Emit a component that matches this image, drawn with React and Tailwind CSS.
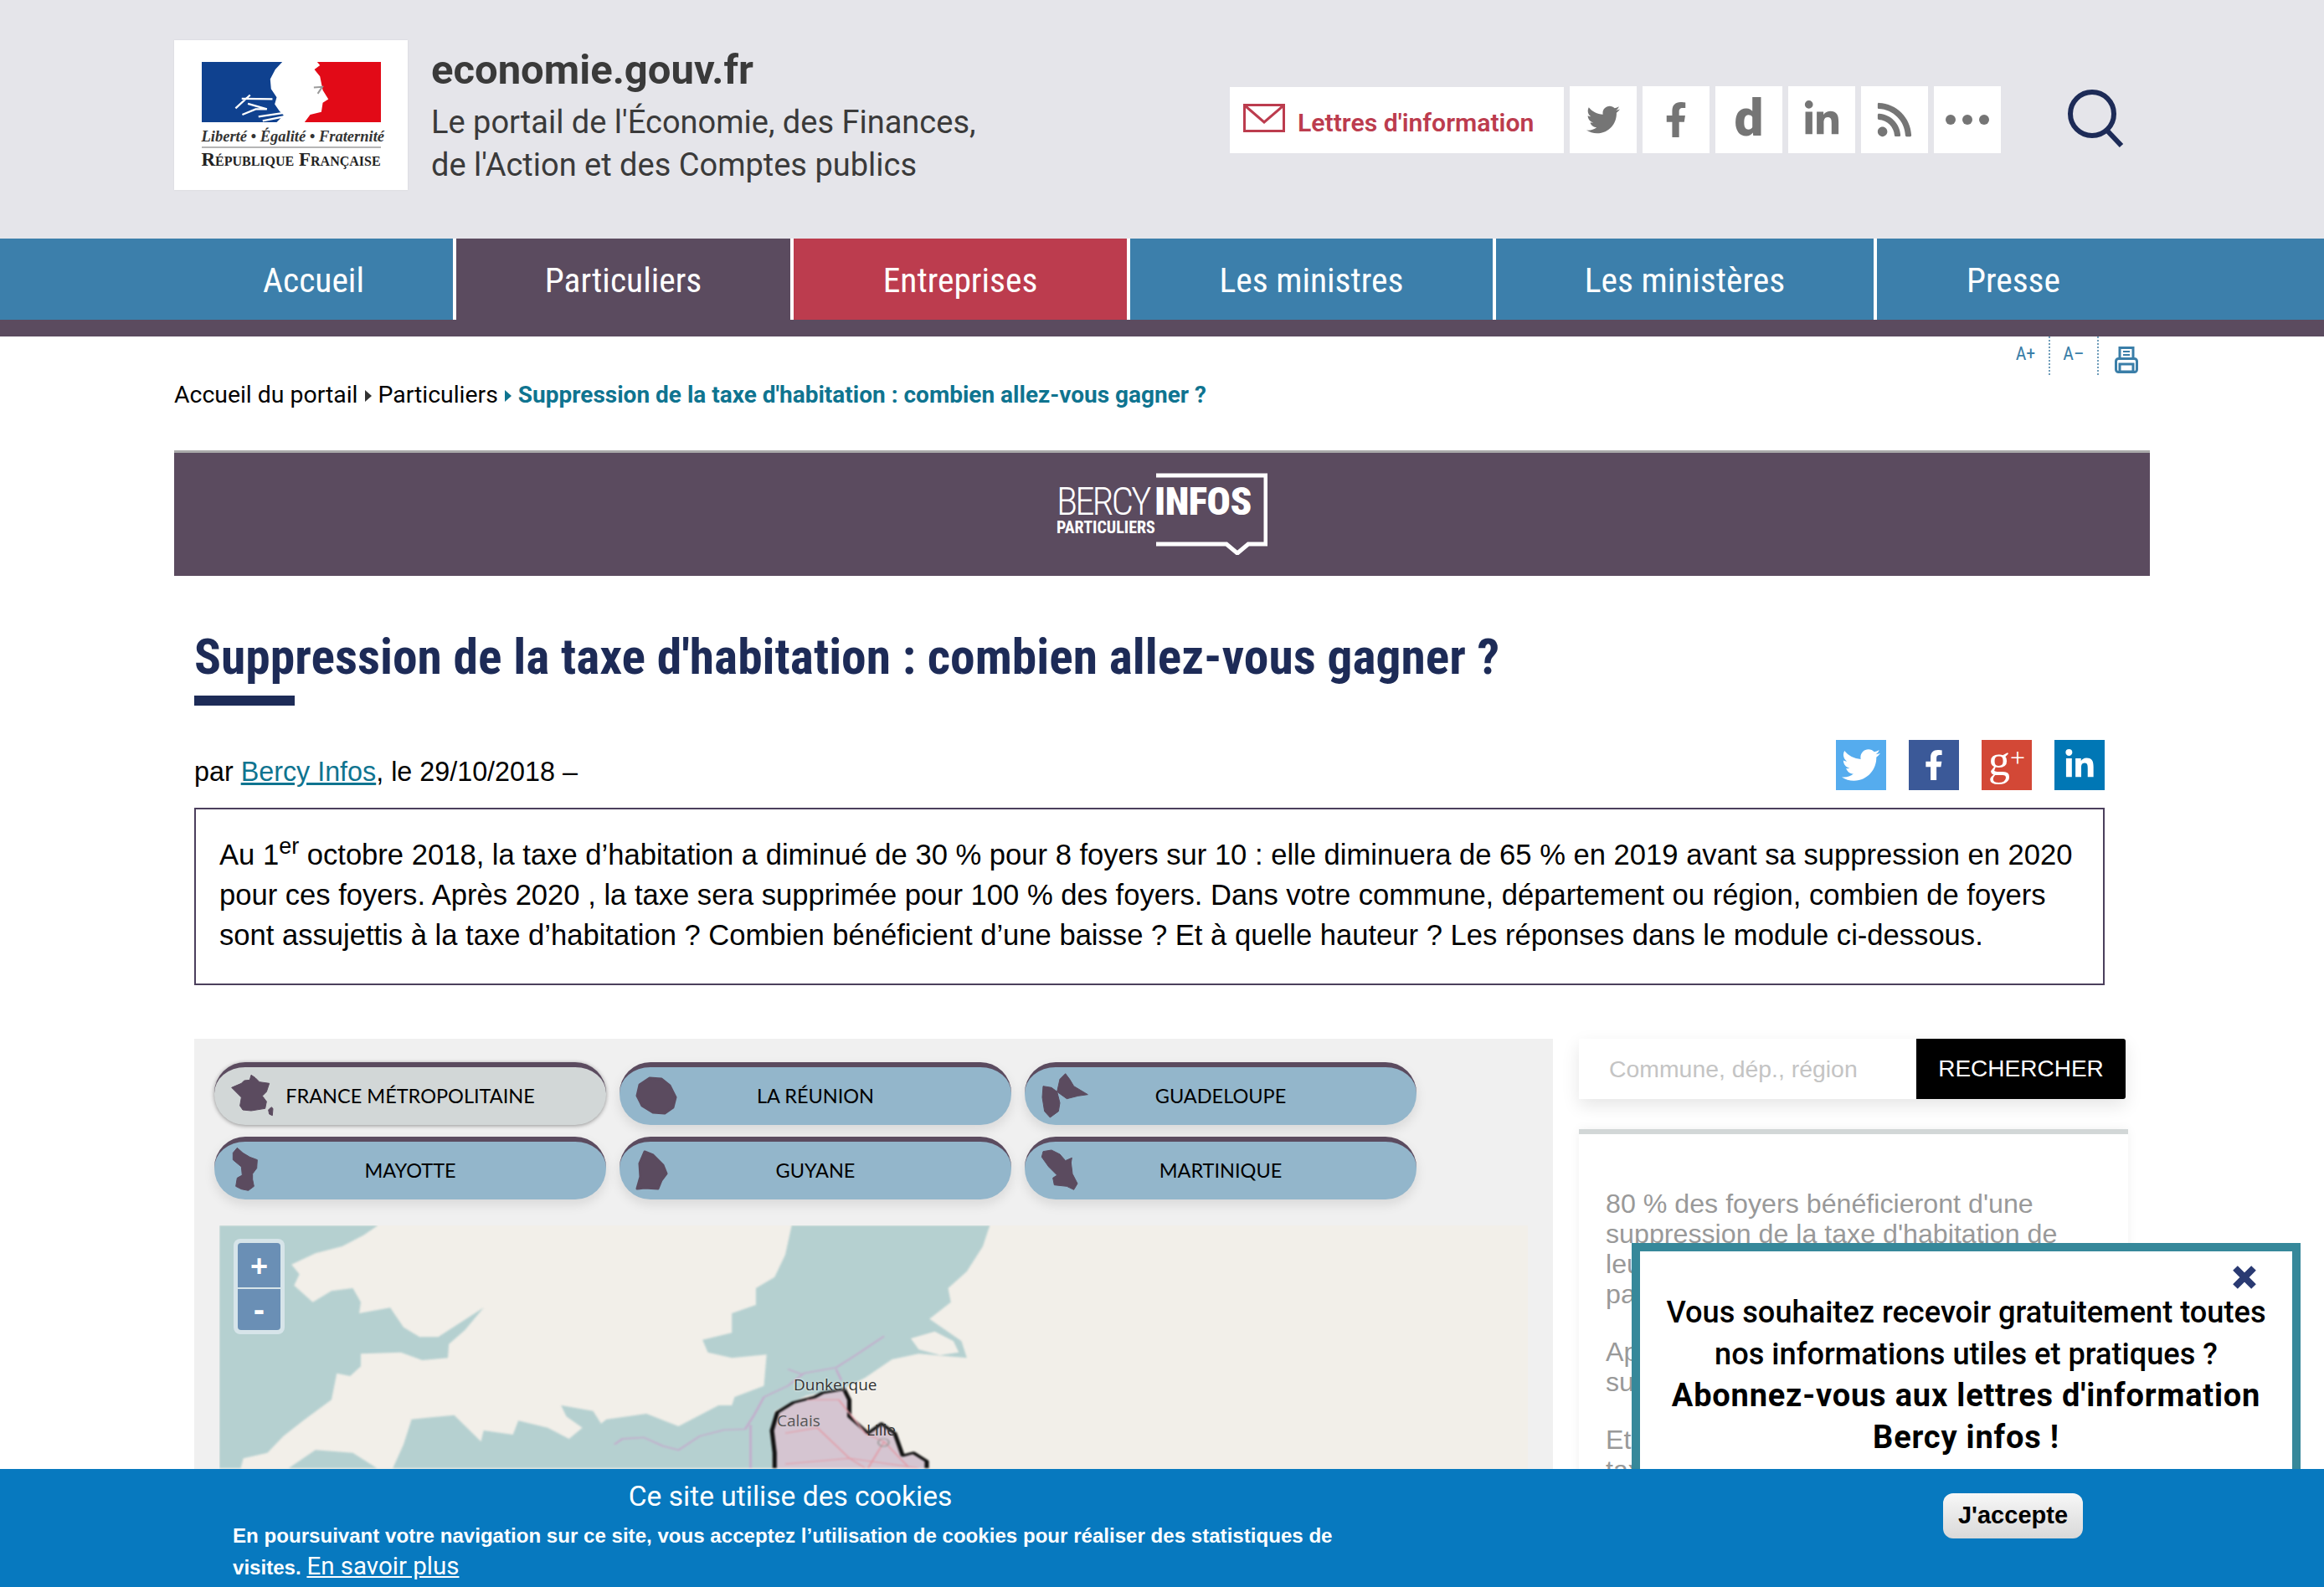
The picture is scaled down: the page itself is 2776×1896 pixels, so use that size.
import React from 'react';
import { FaTwitter, FaFacebookF, FaLinkedinIn, FaRss } from 'react-icons/fa';

const navItems = [
  { label: 'Accueil', cls: 'w-[541px] pl-[208px] bg-[#3c7fab]' },
  { label: 'Particuliers', cls: 'w-[399px] bg-[#5b4b5f]' },
  { label: 'Entreprises', cls: 'w-[398px] bg-[#bc3c4e]' },
  { label: 'Les ministres', cls: 'w-[433px] bg-[#3c7fab]' },
  { label: 'Les ministères', cls: 'w-[451px] bg-[#3c7fab]' },
  { label: 'Presse', cls: 'flex-1 pr-[208px] bg-[#3c7fab]' },
];

const territories = [
  {
    label: 'FRANCE MÉTROPOLITAINE',
    active: true,
    box: '18 24 300 225',
    shapes: [
      '150,70 165,80 180,95 215,100 205,130 190,145 205,165 200,190 150,198 120,195 110,180 115,150 80,115 115,100 125,90 145,88',
      '222,185 228,190 226,215 215,210 212,195',
    ],
  },
  {
    label: 'LA RÉUNION',
    box: '0 0 100 75',
    shapes: ['36,19 50,20 60,28 67,42 64,54 54,61 40,60 27,52 21,40 24,27'],
  },
  {
    label: 'GUADELOUPE',
    box: '9 24 300 225',
    shapes: [
      '155,65 170,85 185,110 235,140 200,145 160,155 125,130 135,85',
      '75,110 105,115 125,130 135,170 130,200 100,222 80,200 72,150',
    ],
  },
  {
    label: 'MAYOTTE',
    box: '18 292 300 225',
    shapes: ['100,332 120,350 145,365 172,375 170,405 155,425 155,445 160,470 140,485 115,480 95,470 100,440 118,430 115,400 85,375 85,350'],
  },
  {
    label: 'GUYANE',
    box: '0 0 100 75',
    shapes: ['30,18 40,22 52,34 56,44 50,52 46,62 30,61 21,62 25,48 24,32'],
  },
  {
    label: 'MARTINIQUE',
    box: '9 292 300 225',
    shapes: ['75,345 105,340 135,355 155,378 178,368 175,385 180,425 198,460 185,482 160,470 115,465 110,440 125,430 95,400 70,365'],
  },
];

function SocialSquare({ children }) {
  return <div className="w-[80px] h-[80px] bg-white flex items-center justify-center text-[#757575]">{children}</div>;
}

function ShareSquare({ bg, children }) {
  return <div className={`w-[60px] h-[60px] flex items-center justify-center text-white ${bg}`}>{children}</div>;
}

function FlagLogo() {
  return (
    <div className="w-[279px] h-[179px] bg-white flex flex-col items-center pt-[26px] shadow-[0_0_2px_rgba(0,0,0,0.08)]">
      <svg viewBox="97 78 641 217" preserveAspectRatio="none" className="w-[214px] h-[72px]">
        <polygon fill="#0f418f" points="97,78 385,78 360,105 342,140 345,175 365,205 358,230 375,255 390,270 365,295 97,295" />
        <polygon fill="#e20a17" points="510,78 738,78 738,295 465,295 485,268 525,258 530,225 550,212 530,180 520,130 500,105 520,90" />
        <path d="M218 245 L270 197 M240 210 L350 212 M262 228 L330 248 L290 248 L242 268 M300 275 L385 262 M315 290 L390 275" stroke="#fff" strokeWidth="7" fill="none" />
        <path d="M498 170 L528 168 L512 192" stroke="#9a9a9a" strokeWidth="6" fill="none" />
      </svg>
      <div className="w-[214px] mt-[6px] pb-[1px] border-b-2 border-[#b5b5b5] font-['Liberation_Serif',serif] italic font-bold text-[18.5px] leading-[22px] text-[#333] text-center whitespace-nowrap">
        Liberté • Égalité • Fraternité
      </div>
      <div className="mt-[3px] font-['Liberation_Serif',serif] font-bold [font-variant:small-caps] text-[23px] leading-[22px] text-[#222] whitespace-nowrap">
        République Française
      </div>
    </div>
  );
}

function BercyLogo() {
  return (
    <div className="relative w-[252px] h-[98px]">
      <svg viewBox="0 0 252 98" className="absolute inset-0 w-[252px] h-[98px]">
        <path d="M119 3 H250 V85 H229 L216 96 L203 85 H119" fill="none" stroke="#fff" strokeWidth="5" />
      </svg>
      <span className="absolute left-0 top-[10px] font-['Roboto_Condensed',sans-serif] font-light text-[47px] leading-[48px] text-white tracking-[-3px]">BERCY</span>
      <span className="absolute left-[117px] top-[10px] font-['Roboto_Condensed',sans-serif] font-black text-[47px] leading-[48px] text-white tracking-[-0.5px]">INFOS</span>
      <span className="absolute left-0 top-[54px] font-['Roboto_Condensed',sans-serif] font-bold text-[20px] leading-[22px] text-white">PARTICULIERS</span>
    </div>
  );
}

function TerritoryButton({ item }) {
  return (
    <div
      className={`relative h-[75px] rounded-[37px] border-t-[6px] border-[#5b4b5f] flex items-center justify-center font-['Lato',sans-serif] text-[23.5px] text-black ${
        item.active ? 'bg-[#d2d7d7] shadow-[0_1px_5px_rgba(0,0,0,0.4)]' : 'bg-[#93b6cb] shadow-[0_6px_14px_rgba(0,0,0,0.1)]'
      }`}
    >
      <svg viewBox={item.box} className="absolute left-0 top-[-6px] w-[100px] h-[75px]">
        {item.shapes.map((s, i) => (
          <polygon key={i} points={s} fill="#5b4b5f" stroke="#5b4b5f" strokeWidth="3" strokeLinejoin="round" />
        ))}
      </svg>
      {item.label}
    </div>
  );
}

function MapArea() {
  return (
    <div className="relative mt-[31px] mx-[30px] h-[300px] bg-[#f2efe9] overflow-hidden">
      <svg viewBox="0 15 1568 870" preserveAspectRatio="none" className="absolute left-0 top-0 w-[1000px] h-[290px] blur-[1px]">
        <polygon
          fill="#b5d0d0"
          points="0,15 297,15 270,50 230,90 180,115 135,155 150,190 140,230 175,290 210,250 250,240 265,290 262,330 320,310 345,380 375,415 410,415 450,365 495,310 460,390 430,440 428,490 380,498 340,470 265,475 265,520 245,555 220,545 210,640 160,710 120,770 90,830 45,850 40,885 0,885"
        />
        <polygon fill="#b5d0d0" points="130,885 180,820 250,830 295,885" />
        <polygon
          fill="#b5d0d0"
          points="1072,15 1060,120 1040,200 1005,240 1005,300 960,330 960,400 905,425 915,470 960,490 1025,478 1020,590 965,630 960,660 935,660 860,735 800,690 725,710 715,725 700,680 640,660 650,700 680,740 655,780 615,740 560,715 550,765 495,750 490,790 440,695 360,710 345,800 325,885 1035,885 1040,680 1100,625 1170,600 1210,560 1260,495 1310,475 1400,490 1390,430 1330,350 1370,290 1365,240 1400,180 1430,90 1443,15"
        />
        <polygon fill="#f2efe9" points="1295,420 1340,395 1375,430 1385,470 1350,480 1310,460" />
        <g fill="none" stroke="#c4a9cc" strokeWidth="4">
          <polyline points="740,800 755,780 795,775 830,805 860,820 900,770 945,748 985,745 1000,700 1020,630 1065,590 1095,545 1155,525 1200,470 1245,412" />
          <polyline points="995,730 995,885" />
          <polyline points="1065,530 1090,548" />
          <polyline points="1155,530 1165,570" />
        </g>
        <polygon
          fill="#d5c5d1"
          stroke="#111"
          strokeWidth="8"
          strokeLinejoin="round"
          points="1040,890 1040,830 1035,750 1045,685 1075,650 1115,630 1130,615 1170,602 1180,640 1180,700 1215,760 1240,725 1265,760 1280,840 1300,830 1325,860 1325,890"
        />
        <g fill="none" stroke="#e39aa5" strokeWidth="3">
          <polyline points="1060,760 1120,740 1180,850 1210,885" />
          <polyline points="1100,640 1160,640 1210,760 1245,790 1215,885" />
          <polyline points="1245,790 1290,880" />
          <polyline points="1060,870 1180,850 1310,885" />
        </g>
        <ellipse cx="1244" cy="793" rx="10" ry="14" fill="none" stroke="#999" strokeWidth="3" />
      </svg>
      <span className="absolute left-[686px] top-[178px] font-['Open_Sans',sans-serif] text-[19px] leading-[24px] text-[#333] [text-shadow:0_0_3px_#fff]">Dunkerque</span>
      <span className="absolute left-[666px] top-[221px] font-['Open_Sans',sans-serif] text-[19px] leading-[24px] text-[#555]">Calais</span>
      <span className="absolute left-[773px] top-[232px] font-['Open_Sans',sans-serif] text-[19px] leading-[24px] text-[#333]">Lille</span>
      <div className="absolute left-[17px] top-[16px] w-[61px] h-[114px] rounded-[8px] bg-[#d6e4e9] p-[5px] flex flex-col gap-[2px]">
        <div className="flex-1 rounded-t-[4px] bg-[#6a8fb5] flex items-center justify-center text-white font-black text-[36px] leading-none pt-[3px]">+</div>
        <div className="flex-1 rounded-b-[4px] bg-[#6a8fb5] flex items-center justify-center text-white font-black text-[40px] leading-none">-</div>
      </div>
    </div>
  );
}

export default function App() {
  return (
    <div className="relative w-[2776px] h-[1896px] overflow-hidden bg-white font-['Liberation_Sans',sans-serif] text-black">
      {/* header */}
      <header className="h-[285px] bg-[#e5e5ea] flex pl-[208px]">
        <div className="w-[1261px] flex gap-[28px] pt-[48px] shrink-0">
          <FlagLogo />
          <div className="font-['Roboto',sans-serif] text-[#3a3a3a]">
            <div className="font-bold text-[49px] leading-[56px] mt-[8px] mb-[9px]">economie.gouv.fr</div>
            <div className="text-[38px] leading-[51px]">Le portail de l'Économie, des Finances,</div>
            <div className="text-[38px] leading-[51px]">de l'Action et des Comptes publics</div>
          </div>
        </div>
        <div className="flex items-start pt-[103px]">
          <div className="w-[399px] h-[79px] mt-[1px] bg-white flex items-center pl-[16px] gap-[15px] mr-[7px]">
            <svg viewBox="0 0 50 34" className="w-[50px] h-[34px] mb-[6px]">
              <rect x="1.5" y="1.5" width="47" height="31" fill="none" stroke="#bc3c4e" strokeWidth="3" />
              <path d="M3 3 L25 22 L47 3" fill="none" stroke="#bc3c4e" strokeWidth="3" />
            </svg>
            <span className="font-['Roboto',sans-serif] font-semibold text-[30.2px] text-[#bc3c4e] mt-[6px]">Lettres d'information</span>
          </div>
          <div className="flex gap-[7px]">
            <SocialSquare><FaTwitter size={40} /></SocialSquare>
            <SocialSquare><FaFacebookF size={42} /></SocialSquare>
            <SocialSquare><span className="font-['Roboto',sans-serif] font-black text-[62px] leading-none mb-[4px]">d</span></SocialSquare>
            <SocialSquare><FaLinkedinIn size={46} /></SocialSquare>
            <SocialSquare><FaRss size={46} /></SocialSquare>
            <SocialSquare>
              <svg viewBox="0 0 52 12" className="w-[52px] h-[12px] fill-current">
                <circle cx="6" cy="6" r="6" /><circle cx="26" cy="6" r="6" /><circle cx="46" cy="6" r="6" />
              </svg>
            </SocialSquare>
          </div>
          <svg viewBox="0 0 70 70" className="w-[70px] h-[70px] ml-[78px] mt-[3px]">
            <circle cx="31" cy="30" r="26" fill="none" stroke="#1d2b57" strokeWidth="6" />
            <path d="M49 50 L66 68" stroke="#1d2b57" strokeWidth="6" />
          </svg>
        </div>
      </header>

      {/* main nav */}
      <nav className="h-[117px] border-b-[20px] border-[#5b4b5f] bg-white flex gap-[4px] font-['Roboto_Condensed',sans-serif] text-[41.5px] text-white">
        {navItems.map((n) => (
          <div key={n.label} className={`flex items-center justify-center pt-[4px] ${n.cls}`}>{n.label}</div>
        ))}
      </nav>

      {/* text tools */}
      <div className="flex justify-end h-[46px] pr-[208px] text-[#3a7ea8] font-['Roboto_Condensed',sans-serif] text-[22px]">
        <div className="w-[59px] flex items-center justify-center border-r-2 border-dotted border-[#6f9db9] pb-[6px] pl-[2px]">A+</div>
        <div className="w-[58px] flex items-center justify-center border-r-2 border-dotted border-[#6f9db9] pb-[6px]">A–</div>
        <div className="w-[61px] flex justify-center items-start pt-[12px] pl-[4px]">
          <svg viewBox="0 0 28 32" className="w-[28px] h-[32px]" fill="none" stroke="#3a7ea8" strokeWidth="3">
            <rect x="6" y="1.5" width="16" height="13" />
            <rect x="1.5" y="14.5" width="25" height="16" rx="3" />
            <rect x="6" y="21" width="16" height="9" />
            <path d="M10 6 H18 M10 10 H18" strokeWidth="2" />
          </svg>
        </div>
      </div>

      {/* breadcrumb */}
      <div className="h-[90px] pl-[208px] pt-[4px] flex items-start gap-[8px] font-['Roboto',sans-serif] text-[28.4px] leading-[40px]">
        <span>Accueil du portail</span>
        <span className="mt-[14px] w-0 h-0 border-y-[7px] border-y-transparent border-l-[8px] border-l-[#333]" />
        <span>Particuliers</span>
        <span className="mt-[14px] w-0 h-0 border-y-[7px] border-y-transparent border-l-[8px] border-l-[#0f7490]" />
        <span className="font-bold text-[28px] text-[#0f7490]">Suppression de la taxe d'habitation : combien allez-vous gagner ?</span>
      </div>

      <main className="px-[208px]">
        {/* banner */}
        <div className="h-[150px] bg-[#5b4b5f] border-t-[3px] border-[#aaaaaa] flex justify-center pt-[24px]">
          <BercyLogo />
        </div>

        <div className="pl-[24px]">
          <h1 className="mt-[57px] font-['Roboto_Condensed',sans-serif] font-bold text-[59.5px] leading-[80px] text-[#1d2b57]">
            Suppression de la taxe d'habitation : combien allez-vous gagner ?
          </h1>
          <div className="w-[120px] h-[12px] bg-[#1d2b57] mt-[6px]" />

          <div className="flex items-start justify-between mt-[41px] w-[2282px]">
            <div className="text-[32.3px] leading-[42px] mt-[17px]">
              par <span className="text-[#0f7490] underline">Bercy Infos</span>, le 29/10/2018 –
            </div>
            <div className="flex gap-[27px]">
              <ShareSquare bg="bg-[#55acee]"><FaTwitter size={46} /></ShareSquare>
              <ShareSquare bg="bg-[#3b5998]"><FaFacebookF size={36} /></ShareSquare>
              <ShareSquare bg="bg-[#d34836]">
                <span className="font-['Liberation_Serif',serif] text-[52px] leading-none mb-[10px]">g<span className="text-[32px] align-[10px]">+</span></span>
              </ShareSquare>
              <ShareSquare bg="bg-[#0077b5]"><FaLinkedinIn size={38} /></ShareSquare>
            </div>
          </div>

          <div className="w-[2282px] h-[212px] mt-[21px] border-2 border-[#4b3f5c] pl-[28px] pr-[20px] pt-[30px] text-[34.6px] leading-[48px]">
            Au 1<sup className="text-[27px] leading-none">er</sup> octobre 2018, la taxe d’habitation a diminué de 30 % pour 8 foyers sur 10 : elle diminuera de 65 % en 2019 avant sa suppression en 2020 pour ces foyers. Après 2020 , la taxe sera supprimée pour 100 % des foyers. Dans votre commune, département ou région, combien de foyers sont assujettis à la taxe d’habitation ? Combien bénéficient d’une baisse ? Et à quelle hauteur ? Les réponses dans le module ci-dessous.
          </div>

          <div className="flex mt-[64px] items-start">
            {/* map panel */}
            <div className="w-[1623px] h-[540px] bg-[#f0f0f0] pt-[28px]">
              <div className="grid grid-cols-[468px_468px_468px] gap-x-[16px] gap-y-[14px] pl-[24px]">
                {territories.map((t) => (
                  <TerritoryButton key={t.label} item={t} />
                ))}
              </div>
              <MapArea />
            </div>

            {/* right column */}
            <div className="w-[656px] ml-[31px]">
              <div className="w-[653px] h-[72px] bg-white flex items-stretch shadow-[0_8px_20px_rgba(0,0,0,0.1)]">
                <div className="flex-1 flex items-center pl-[36px] text-[#c4c4c4] text-[28.4px]">Commune, dép., région</div>
                <div className="w-[250px] bg-black rounded-r-[3px] flex items-center justify-center text-white text-[28px]">RECHERCHER</div>
              </div>
              <div className="mt-[36px] h-[540px] border-t-[6px] border-[#d2d7d7] shadow-[0_0_12px_rgba(0,0,0,0.06)] px-[32px] pt-[65px] text-[#999] text-[32.2px] leading-[36px]">
                <p>80 % des foyers bénéficieront d'une suppression de la taxe d'habitation de leur résidence principale, sans aucune participation.</p>
                <p className="mt-[33px]">Après 2020, la taxe d'habitation sera supprimée pour tous.</p>
                <p className="mt-[33px]">Et les autres foyers paieront moins de<br />taxe dès cette année.</p>
              </div>
            </div>
          </div>
        </div>
      </main>

      {/* newsletter popup */}
      <div className="absolute left-[1949px] top-[1485px] w-[799px] h-[420px] bg-white border-[10px] border-[#36889a] text-center font-['Roboto',sans-serif] font-medium text-[36.2px] leading-[49.5px] pt-[48px] px-[8px]">
        <svg viewBox="0 0 30 30" className="absolute right-[42px] top-[16px] w-[30px] h-[30px]">
          <path d="M4 4 L26 26 M26 4 L4 26" stroke="#2a3a72" strokeWidth="8" />
        </svg>
        <p>Vous souhaitez recevoir gratuitement toutes nos informations utiles et pratiques ?</p>
        <p className="font-bold text-[38px] tracking-[0.8px] mt-[1px]">Abonnez-vous aux lettres d'information Bercy infos !</p>
      </div>

      {/* cookie banner */}
      <div className="absolute left-0 right-0 bottom-0 h-[141px] bg-[#0779bf] text-white flex items-start">
        <div className="w-[1332px] ml-[278px] pt-[12px]">
          <div className="text-center font-['Roboto',sans-serif] text-[33.6px] leading-[42px]">Ce site utilise des cookies</div>
          <div className="mt-[8px] font-bold text-[24.1px] leading-[36px]">
            En poursuivant votre navigation sur ce site, vous acceptez l’utilisation de cookies pour réaliser des statistiques de visites.{' '}
            <span className="font-['Roboto',sans-serif] font-normal text-[29.5px] underline">En savoir plus</span>
          </div>
        </div>
        <div className="ml-[711px] mt-[29px] w-[167px] h-[54px] rounded-[12px] bg-linear-to-b from-[#f7f7f7] to-[#d9d9d9] text-black font-bold text-[29px] flex items-center justify-center">
          J'accepte
        </div>
      </div>
    </div>
  );
}
